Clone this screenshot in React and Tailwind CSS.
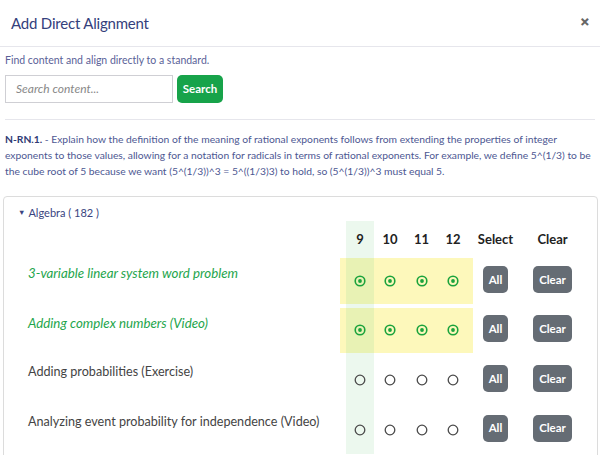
import React from "react";

const rows = [
  { label: "3-variable linear system word problem", sel: true },
  { label: "Adding complex numbers (Video)", sel: true },
  { label: "Adding probabilities (Exercise)", sel: false },
  { label: "Analyzing event probability for independence (Video)", sel: false },
];

function Radio({ on }) {
  return on ? (
    <svg width="12" height="12" viewBox="0 0 12 12">
      <circle cx="6" cy="6" r="4.8" fill="none" stroke="#1aa33c" strokeWidth="1.6" />
      <circle cx="6" cy="6" r="1.9" fill="#1aa33c" />
    </svg>
  ) : (
    <svg width="12" height="12" viewBox="0 0 12 12">
      <circle cx="6" cy="6" r="4.8" fill="none" stroke="#4a4a4a" strokeWidth="1.3" />
    </svg>
  );
}

function Cell({ w, green, yellow, children }) {
  return (
    <div className={`flex flex-col ${w} ${green ? "bg-[#ecf8ee]" : ""}`}>
      <div className="h-[2px]" />
      <div
        className={`flex-1 flex items-center justify-center ${
          yellow ? (green ? "bg-[#e8f2b4]" : "bg-[#fdf8bb]") : ""
        }`}
      >
        {children}
      </div>
      <div className="h-[2px]" />
    </div>
  );
}

export default function App() {
  return (
    <div className="w-[600px] h-[455px] overflow-hidden bg-white font-['Lato',sans-serif]">
      <div className="h-[47px] border-b border-[#e6e6ec] flex items-center justify-between pl-[11px] pr-[10px]">
        <div className="text-[15px] tracking-[-0.2px] text-[#34407c]">Add Direct Alignment</div>
        <div className="text-[15px] font-bold text-[#666] leading-none -mt-[3px] font-['Inter',sans-serif]">×</div>
      </div>
      <div className="px-[5px]">
        <div className="text-[10.5px] text-[#5a5f98] mt-[6px] leading-[14px]">
          Find content and align directly to a standard.
        </div>
        <div className="flex mt-[8px] gap-[4px]">
          <div className="w-[168px] h-[28px] border border-[#cfcfd4] flex items-center px-[10px] text-[12px] italic text-[#888]">
            Search content...
          </div>
          <div className="w-[46px] h-[28px] bg-[#17a34a] rounded-[5px] flex items-center justify-center text-white text-[11.5px] font-bold">
            Search
          </div>
        </div>
        <div className="mt-[16px] border-t border-[#e6e6ec]" />
        <div className="mt-[11px] text-[10.3px] leading-[16px] text-[#4d5792] pr-[4px]">
          <span className="font-bold text-[#2f3a74]">N-RN.1.</span> - Explain how the definition of the meaning of rational exponents follows from extending the properties of integer exponents to those values, allowing for a notation for radicals in terms of rational exponents. For example, we define 5^(1/3) to be the cube root of 5 because we want (5^(1/3))^3 = 5^((1/3)3) to hold, so (5^(1/3))^3 must equal 5.
        </div>
      </div>
      <div className="mt-[17px] ml-[3px] mr-[2px] border border-[#dcdcdc] rounded-[4px] h-[300px]">
        <div className="flex items-start h-[24px] pt-[9px] pl-[14px] text-[11px] leading-[14px] text-[#3a4480]">
          <span className="text-[7.5px] mr-[3px]">▼</span>
          <span>Algebra ( 182 )</span>
        </div>
        <div className="flex h-[35px] text-[13px] leading-[16px] font-bold text-[#222]">
          <div className="flex-1" />
          <div className="w-[6px]" />
          <div className="w-[28px] bg-[#ecf8ee] flex items-start justify-center pt-[10px]">9</div>
          <div className="w-[32px] flex items-start justify-center pt-[10px]">10</div>
          <div className="w-[31px] flex items-start justify-center pt-[10px]">11</div>
          <div className="w-[32px] flex items-start justify-center pt-[10px]">12</div>
          <div className="w-[4px]" />
          <div className="w-[45px] flex items-start justify-center pt-[10px]">Select</div>
          <div className="w-[69px] flex items-start justify-center pt-[10px]">Clear</div>
          <div className="w-[10px]" />
        </div>
        {rows.map((r, i) => (
          <div key={i} className="flex h-[49.6px]">
            <div
              className={`flex-1 pl-[24px] pt-[8px] leading-[18px] whitespace-nowrap ${
                r.sel ? "italic text-[13.3px] text-[#1ea54c]" : "text-[12.6px] text-[#444]"
              }`}
            >
              {r.label}
            </div>
            <Cell w="w-[6px]" yellow={r.sel} />
            <Cell w="w-[28px]" green yellow={r.sel}>
              <Radio on={r.sel} />
            </Cell>
            <Cell w="w-[32px]" yellow={r.sel}>
              <Radio on={r.sel} />
            </Cell>
            <Cell w="w-[31px]" yellow={r.sel}>
              <Radio on={r.sel} />
            </Cell>
            <Cell w="w-[32px]" yellow={r.sel}>
              <Radio on={r.sel} />
            </Cell>
            <Cell w="w-[4px]" yellow={r.sel} />
            <div className="w-[45px] flex items-center justify-center -mt-[3px]">
              <div className="w-[25px] h-[27px] rounded-[5px] bg-[#656c74] text-white text-[11.5px] font-bold flex items-center justify-center">
                All
              </div>
            </div>
            <div className="w-[69px] flex items-center justify-center -mt-[3px]">
              <div className="w-[39px] h-[27px] rounded-[5px] bg-[#656c74] text-white text-[11.5px] font-bold flex items-center justify-center">
                Clear
              </div>
            </div>
            <div className="w-[10px]" />
          </div>
        ))}
      </div>
    </div>
  );
}
